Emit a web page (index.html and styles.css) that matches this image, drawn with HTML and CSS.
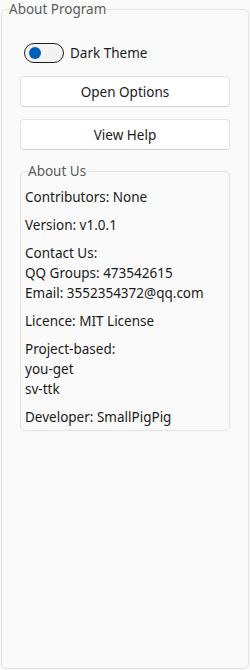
FILE: index.html
```html
<!DOCTYPE html>
<html lang="en">
<head>
    <meta charset="UTF-8">
    <meta name="viewport" content="width=device-width, initial-scale=1.0">
    <title>About Program</title>
    <link rel="stylesheet" href="styles.css">
</head>
<body>
    <fieldset class="panel">
        <legend>About Program</legend>

        <label class="switch">
            <span class="track"><span class="knob"></span></span>
            <span>Dark Theme</span>
        </label>

        <button class="btn first">Open Options</button>
        <button class="btn">View Help</button>

        <fieldset class="about">
            <legend>About Us</legend>
            <p>Contributors: None</p>
            <p>Version: v1.0.1</p>
            <p>Contact Us:<br>QQ Groups: 473542615<br>Email: 3552354372@qq.com</p>
            <p>Licence: MIT License</p>
            <p>Project-based:<br>you-get<br>sv-ttk</p>
            <p>Developer: SmallPigPig</p>
        </fieldset>
    </fieldset>
</body>
</html>
```

FILE: styles.css
```css
html, body {
    margin: 0;
    padding: 0;
    height: 670px;
}

body {
    font-family: "Noto Sans", "Open Sans", sans-serif;
    font-size: 13.5px;
    color: #1b1b1b;
    background-color: #fafafa;
    overflow: hidden;
}

.panel {
    box-sizing: border-box;
    margin: 0 1px 1px 1px;
    height: 669px;
    padding: 0 18px;
    border: 1px solid #e2e2e2;
    border-radius: 5px;
}

legend {
    color: #5c5c5c;
    padding: 0;
    line-height: 18px;
}

.panel > legend {
    margin-left: -11px;
}

.switch {
    display: flex;
    align-items: center;
    gap: 6px;
    margin: 25px 0 0 4px;
    height: 20px;
}

.track {
    box-sizing: border-box;
    width: 40px;
    height: 20px;
    border: 1px solid #1f1f1f;
    border-radius: 10px;
    background-color: #f3f3f3;
    display: flex;
    align-items: center;
    padding-left: 4px;
}

.knob {
    width: 12px;
    height: 12px;
    border-radius: 50%;
    background-color: #005fb8;
}

.btn {
    display: block;
    width: 100%;
    height: 31px;
    margin-top: 12px;
    border: 1px solid #e3e3e3;
    border-bottom-color: #d2d2d2;
    border-radius: 4px;
    background-color: #ffffff;
    font-family: inherit;
    font-size: 13.5px;
    color: #1b1b1b;
    padding: 0;
}

.btn.first {
    margin-top: 13px;
}

.about {
    margin: 12px 0 0 0;
    padding: 7px 4px 3px 4px;
    border: 1px solid #e2e2e2;
    border-radius: 5px;
}

.about > legend {
    margin-left: 3px;
}

.about p {
    margin: 0 0 8px 0;
    line-height: 20px;
}

.about p:last-child {
    margin-bottom: 0;
}
```
